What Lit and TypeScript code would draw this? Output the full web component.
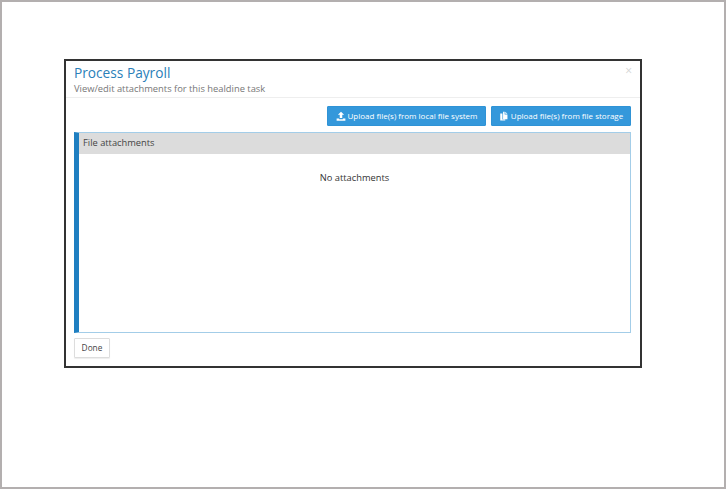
import { LitElement, html, css } from "lit";
import { customElement } from "lit/decorators.js";

@customElement("app-root")
export class AppRoot extends LitElement {
  static styles = css`
    :host {
      display: block;
      box-sizing: border-box;
      width: 726px;
      height: 489px;
      border: 2px solid #b3afaf;
      padding: 57px 0 0 62px;
      background: #fff;
      font-family: "Open Sans", "Liberation Sans", sans-serif;
      color: #333;
    }
    .modal {
      box-sizing: border-box;
      width: 578px;
      height: 309px;
      border: 2px solid #333;
      background: #fff;
      display: flex;
      flex-direction: column;
    }
    .header {
      position: relative;
      box-sizing: border-box;
      height: 37px;
      padding: 2px 8px 0;
      border-bottom: 1px solid #eee;
    }
    .title {
      font-size: 13.7px;
      line-height: 19px;
      color: #2a80b9;
    }
    .subtitle {
      font-size: 9.35px;
      line-height: 13px;
      color: #777;
    }
    .close {
      position: absolute;
      top: 3px;
      right: 8px;
      font-size: 12px;
      line-height: 14px;
      color: #d5d5d5;
    }
    .body {
      flex: 1;
      display: flex;
      flex-direction: column;
      padding: 8px 9px 0 8px;
    }
    .actions {
      display: flex;
      justify-content: flex-end;
      gap: 5px;
      margin-bottom: 6px;
    }
    .btn {
      box-sizing: border-box;
      height: 20px;
      display: flex;
      align-items: center;
      justify-content: center;
      gap: 2px;
      padding-bottom: 1px;
      background: #3498db;
      border: 1px solid #2f93d6;
      border-radius: 1px;
      color: #fff;
      font-size: 8px;
      font-weight: 500;
    }
    .btn.local { width: 159px; }
    .btn.storage { width: 140px; }
    .btn svg { width: 10px; height: 10px; fill: #fff; flex: none; }
    .panel {
      box-sizing: border-box;
      height: 201px;
      border: 1px solid #a3cde8;
      border-left: 5px solid #1f7fc1;
    }
    .panel-head {
      height: 21px;
      background: #dcdcdc;
      font-size: 9.3px;
      line-height: 20px;
      padding-left: 4px;
      color: #444;
    }
    .empty {
      margin-top: 18px;
      text-align: center;
      font-size: 9.3px;
      line-height: 12px;
      color: #333;
    }
    .done {
      box-sizing: border-box;
      margin-top: 5px;
      width: 36px;
      height: 20px;
      display: flex;
      align-items: center;
      justify-content: center;
      padding-bottom: 1px;
      border: 1px solid #ddd;
      border-radius: 1px;
      box-shadow: 0 1px 1px #eee;
      background: #fff;
      font-size: 8.3px;
      color: #444;
    }
  `;

  render() {
    return html`
      <div class="modal">
        <div class="header">
          <div class="title">Process Payroll</div>
          <div class="subtitle">View/edit attachments for this healdine task</div>
          <div class="close">×</div>
        </div>
        <div class="body">
          <div class="actions">
            <div class="btn local">
              <svg viewBox="0 0 16 16"><path d="M8 1l5 5H10v5H6V6H3zM1 12h4v1h6v-1h4v3.500H1z"/></svg>
              Upload file(s) from local file system
            </div>
            <div class="btn storage">
              <svg viewBox="0 0 16 16"><path d="M6.500 1H9v4.500h4.500V13h-7zM10 1l3.500 3.500H10zM2 4h3.500v9.500H10V15H2z"/></svg>
              Upload file(s) from file storage
            </div>
          </div>
          <div class="panel">
            <div class="panel-head">File attachments</div>
            <div class="empty">No attachments</div>
          </div>
          <div class="done">Done</div>
        </div>
      </div>
    `;
  }
}
